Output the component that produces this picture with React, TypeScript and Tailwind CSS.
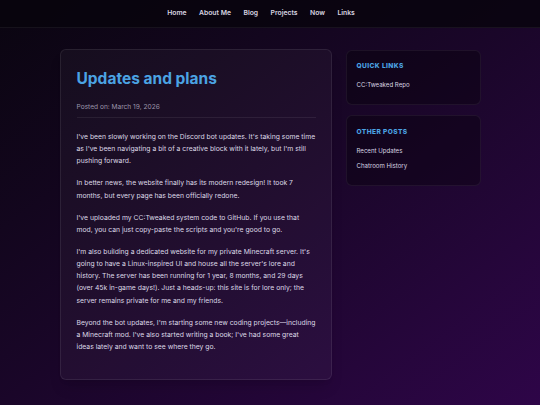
const nav = ["Home", "About Me", "Blog", "Projects", "Now", "Links"];

const paragraphs = [
  "I've been slowly working on the Discord bot updates. It's taking some time as I've been navigating a bit of a creative block with it lately, but I'm still pushing forward.",
  "In better news, the website finally has its modern redesign! It took 7 months, but every page has been officially redone.",
  "I've uploaded my CC:Tweaked system code to GitHub. If you use that mod, you can just copy-paste the scripts and you're good to go.",
  "I'm also building a dedicated website for my private Minecraft server. It's going to have a Linux-inspired UI and house all the server's lore and history. The server has been running for 1 year, 8 months, and 29 days (over 45k in-game days!). Just a heads-up: this site is for lore only; the server remains private for me and my friends.",
  "Beyond the bot updates, I'm starting some new coding projects\u2014including a Minecraft mod. I've also started writing a book; I've had some great ideas lately and want to see where they go.",
];

export default function App() {
  return (
    <div
      className="min-h-[405px] bg-gradient-to-br from-[#0a0510] via-[#1a0629] to-[#2e0548] text-[#ddd8e6]"
      style={{ fontFamily: "Inter, 'Noto Sans', sans-serif" }}
    >
      {/* Top nav */}
      <header className="h-[28px] border-b border-white/[0.06] bg-[#08040d]/80 flex items-center justify-center gap-[12.5px] pr-[18px] text-[6.8px] font-semibold text-[#d8d4e0]">
        {nav.map((n) => (
          <span key={n}>{n}</span>
        ))}
      </header>

      <div className="mx-auto w-[421px] pt-[21px] flex gap-[14px] items-start">
        {/* Post */}
        <main className="w-[272px] shrink-0 rounded-[6px] border border-white/[0.08] bg-white/[0.035] pl-[16px] pr-[15px] pt-[18px] pb-[26px] shadow-lg">
          <h1 className="text-[15.5px] leading-[22px] font-bold text-[#4ba3e3]">Updates and plans</h1>
          <p className="mt-[12px] text-[6.6px] leading-[10px] text-[#9c95aa] pb-[5px] border-b border-white/[0.07]">
            Posted on: March 19, 2026
          </p>
          <div className="mt-[13px] space-y-[9.8px] text-[6.8px] leading-[12.2px]">
            {paragraphs.map((p, i) => (
              <p key={i}>{p}</p>
            ))}
          </div>
        </main>

        {/* Sidebar */}
        <aside className="flex-1 space-y-[10px] pt-[1px]">
          <section className="rounded-[6px] border border-white/[0.06] bg-black/30 px-[10px] pt-[11px] pb-[15px]">
            <h2 className="text-[6.6px] font-extrabold tracking-[0.06em] text-[#4ba3e3]">QUICK LINKS</h2>
            <ul className="mt-[8px] text-[6.1px] text-[#d8d4e0]">
              <li>CC:Tweaked Repo</li>
            </ul>
          </section>
          <section className="rounded-[6px] border border-white/[0.06] bg-black/30 px-[10px] pt-[12px] pb-[15px]">
            <h2 className="text-[6.6px] font-extrabold tracking-[0.06em] text-[#4ba3e3]">OTHER POSTS</h2>
            <ul className="mt-[8px] space-y-[6px] text-[6.1px] text-[#d8d4e0]">
              <li>Recent Updates</li>
              <li>Chatroom History</li>
            </ul>
          </section>
        </aside>
      </div>
    </div>
  );
}
